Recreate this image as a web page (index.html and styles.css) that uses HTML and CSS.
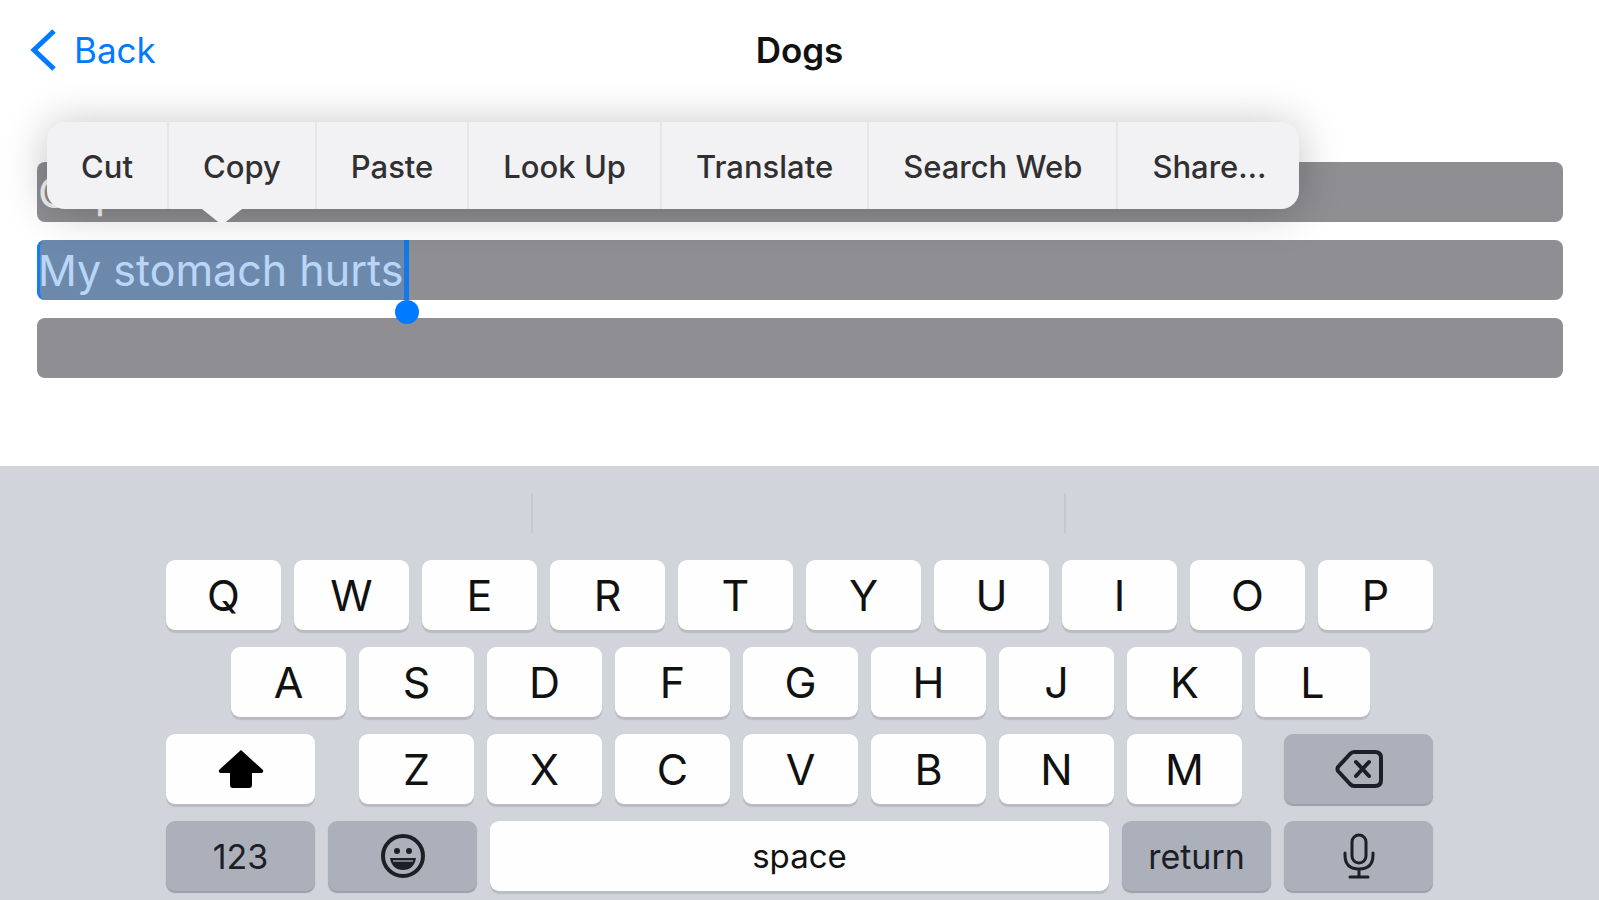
FILE: index.html
```
<!DOCTYPE html>
<html lang="en">
<head>
    <meta charset="UTF-8">
    <meta name="viewport" content="width=device-width, initial-scale=1.0">
    <title>Dogs</title>
    <link rel="stylesheet" href="styles.css">
</head>
<body>
    <header class="navbar">
        <a class="back" href="#">
            <svg width="26" height="42" viewBox="0 0 26 42"><path d="M24 2 L4 21 L24 40" fill="none" stroke="#007aff" stroke-width="5"/></svg>
            Back
        </a>
        <h1>Dogs</h1>
    </header>

    <main class="notes">
        <div class="field">
            <input type="text" value="Cup" aria-label="First note">
        </div>
        <div class="field selected">
            <input type="text" value="My stomach hurts" aria-label="Second note">
            <div class="selection"></div>
        </div>
        <div class="field">
            <input type="text" value="" aria-label="Third note">
        </div>

        <!-- Edit menu shown over the selected text -->
        <div class="edit-menu">
            <button>Cut</button>
            <button>Copy</button>
            <button>Paste</button>
            <button>Look Up</button>
            <button>Translate</button>
            <button>Search Web</button>
            <button>Share…</button>
        </div>
    </main>

    <section class="keyboard">
        <div class="suggestions">
            <span></span>
            <span></span>
            <span></span>
        </div>
        <div class="keys">
            <div class="row">
                <button class="key">Q</button>
                <button class="key">W</button>
                <button class="key">E</button>
                <button class="key">R</button>
                <button class="key">T</button>
                <button class="key">Y</button>
                <button class="key">U</button>
                <button class="key">I</button>
                <button class="key">O</button>
                <button class="key">P</button>
            </div>
            <div class="row row-middle">
                <button class="key">A</button>
                <button class="key">S</button>
                <button class="key">D</button>
                <button class="key">F</button>
                <button class="key">G</button>
                <button class="key">H</button>
                <button class="key">J</button>
                <button class="key">K</button>
                <button class="key">L</button>
            </div>
            <div class="row">
                <button class="key wide" aria-label="Shift">
                    <svg width="46" height="40" viewBox="0 0 46 40"><path d="M23 1 L45 21 Q46 24 43 24 H34 V36 Q34 39 31 39 H15 Q12 39 12 36 V24 H3 Q0 24 1 21 Z" fill="#000"/></svg>
                </button>
                <div class="row letters">
                    <button class="key">Z</button>
                    <button class="key">X</button>
                    <button class="key">C</button>
                    <button class="key">V</button>
                    <button class="key">B</button>
                    <button class="key">N</button>
                    <button class="key">M</button>
                </div>
                <button class="key wide dark" aria-label="Delete">
                    <svg width="48" height="40" viewBox="0 0 48 40" fill="none" stroke="#1c2026" stroke-width="4" stroke-linejoin="round" stroke-linecap="round"><path d="M19 3 H40 Q46 3 46 9 V31 Q46 37 40 37 H19 Q17 37 15 35 L3 22 Q2 20 3 18 L15 5 Q17 3 19 3 Z"/><path d="M21 13 L34 27 M34 13 L21 27"/></svg>
                </button>
            </div>
            <div class="row">
                <button class="key wide dark">123</button>
                <button class="key wide dark" aria-label="Emoji">
                    <svg width="46" height="46" viewBox="0 0 46 46"><circle cx="23" cy="23" r="20" fill="none" stroke="#1c2026" stroke-width="4"/><ellipse cx="17" cy="18" rx="3" ry="3" fill="#1c2026"/><ellipse cx="29" cy="18" rx="3" ry="3" fill="#1c2026"/><path d="M10 25 H36 Q34 37 23 37 Q12 37 10 25 Z" fill="#1c2026"/><path d="M13 28 H33" stroke="#747b86" stroke-width="2"/></svg>
                </button>
                <button class="key space">space</button>
                <button class="key wide dark">return</button>
                <button class="key wide dark" aria-label="Dictate">
                    <svg width="32" height="46" viewBox="0 0 32 46" fill="none" stroke="#1c2026" stroke-width="3" stroke-linecap="round"><rect x="9" y="2" width="14" height="28" rx="7"/><path d="M2 20 V22 Q2 36 16 36 Q30 36 30 22 V20 M16 36 V43 M7 44 H25"/></svg>
                </button>
            </div>
        </div>
    </section>
</body>
</html>
```
FILE: styles.css
```
* {
    box-sizing: border-box;
}
body {
    font-family: Inter, "Liberation Sans", sans-serif;
    margin: 0;
    min-height: 100vh;
    display: flex;
    flex-direction: column;
    background-color: #ffffff;
    overflow: hidden;
}
button {
    font-family: inherit;
    border: none;
    margin: 0;
    padding: 0;
}
.navbar {
    display: grid;
    grid-template-columns: 1fr auto 1fr;
    align-items: center;
    height: 100px;
    padding: 0 30px;
}
.navbar h1 {
    margin: 0;
    font-size: 35px;
    font-weight: 600;
    color: #111;
}
.back {
    display: flex;
    align-items: center;
    gap: 18px;
    font-size: 35px;
    color: #007aff;
    text-decoration: none;
}
.notes {
    position: relative;
    flex: 1;
    display: flex;
    flex-direction: column;
    gap: 18px;
    padding: 62px 36px 0 37px;
}
.field {
    position: relative;
    height: 60px;
}
.field input {
    display: block;
    width: 100%;
    height: 100%;
    padding: 0 1px;
    border: none;
    border-radius: 8px;
    outline: none;
    background-color: #8e8e93;
    color: #f4f4f6;
    font-family: inherit;
    font-size: 43px;
}
.field.selected {
    z-index: 1;
}
.selection {
    position: absolute;
    top: 0;
    left: 0;
    width: 372px;
    height: 100%;
    background-color: rgba(0, 122, 255, 0.24);
    border-left: 3px solid rgba(0, 122, 255, 0.8);
    border-right: 5px solid #1478e6;
    border-radius: 8px 0 0 8px;
}
/* Drag handle at the end of the selection */
.selection::after {
    content: "";
    position: absolute;
    right: -15px;
    bottom: -24px;
    width: 24px;
    height: 24px;
    border-radius: 50%;
    background-color: #007aff;
}
.edit-menu {
    position: absolute;
    z-index: 2;
    top: 22px;
    left: 47px;
    display: flex;
    height: 87px;
    border-radius: 18px;
    background-color: #f2f2f4;
    box-shadow: 0 2px 44px rgba(0, 0, 0, 0.24);
}
.edit-menu::after {
    content: "";
    position: absolute;
    top: 100%;
    left: 155px;
    border: 20px solid transparent;
    border-top: 16px solid #f2f2f4;
    border-bottom: none;
}
.edit-menu button {
    padding: 2px 34px 0;
    background: none;
    border-right: 2px solid #e6e6e8;
    font-size: 31px;
    font-weight: 500;
    color: #303032;
    white-space: nowrap;
}
.edit-menu button:last-child {
    padding-right: 32px;
    border-right: none;
}
.keyboard {
    background-color: #d1d4db;
}
.suggestions {
    display: grid;
    grid-template-columns: 1fr 1fr 1fr;
    padding: 27px 0;
}
.suggestions span {
    height: 40px;
    border-right: 2px solid #c5c8cc;
}
.suggestions span:last-child {
    border-right: none;
}
.keys {
    display: flex;
    flex-direction: column;
    gap: 17px;
    padding: 0 166px 9px;
}
.row {
    display: flex;
    gap: 13px;
}
.row-middle {
    padding: 0 63px 0 65px;
}
.letters {
    flex: 1;
    margin: 0 29px 0 31px;
}
.key {
    display: flex;
    flex: 1;
    align-items: center;
    justify-content: center;
    height: 70px;
    border-radius: 9px;
    background-color: #fefefe;
    box-shadow: 0 3px 1px #b9bcc1;
    font-size: 43px;
    color: #111;
}
.key.wide {
    flex: 0 0 149px;
}
.key.dark {
    background-color: #abb0ba;
    box-shadow: 0 2px 1px #9a9fa8;
    font-size: 34px;
    color: #1c2026;
}
.key.space {
    font-size: 33px;
}
```
